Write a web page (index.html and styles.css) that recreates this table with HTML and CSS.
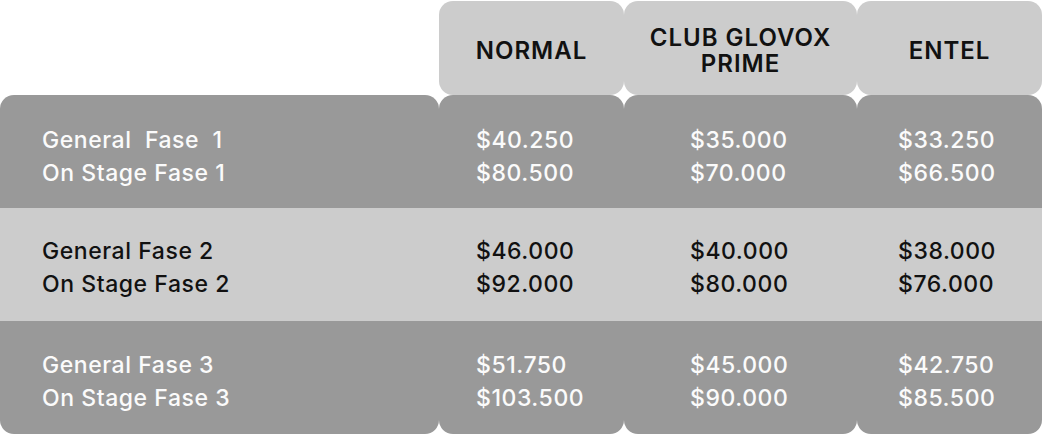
FILE: index.html
```html
<!DOCTYPE html>
<html lang="es">
<head>
<meta charset="utf-8">
<title>Precios</title>
<link rel="stylesheet" href="styles.css">
</head>
<body>
<div class="price-table">
  <div class="corner"></div>
  <div class="head">NORMAL</div>
  <div class="head">CLUB GLOVOX<br>PRIME</div>
  <div class="head">ENTEL</div>

  <div class="cell dark top c0">General&nbsp; Fase&nbsp; 1<br>On Stage Fase 1</div>
  <div class="cell dark top c1">$40.250<br>$80.500</div>
  <div class="cell dark top c2">$35.000<br>$70.000</div>
  <div class="cell dark top c3">$33.250<br>$66.500</div>

  <div class="cell light c0">General Fase 2<br>On Stage Fase 2</div>
  <div class="cell light c1">$46.000<br>$92.000</div>
  <div class="cell light c2">$40.000<br>$80.000</div>
  <div class="cell light c3">$38.000<br>$76.000</div>

  <div class="cell dark bottom c0">General Fase 3<br>On Stage Fase 3</div>
  <div class="cell dark bottom c1">$51.750<br>$103.500</div>
  <div class="cell dark bottom c2">$45.000<br>$90.000</div>
  <div class="cell dark bottom c3">$42.750<br>$85.500</div>
</div>
</body>
</html>
```

FILE: styles.css
```css
html, body {
  margin: 0;
  padding: 0;
  background: #ffffff;
}

body {
  font-family: Inter, "Liberation Sans", sans-serif;
}

.price-table {
  display: grid;
  grid-template-columns: 439px 185px 233px 185px;
  grid-template-rows: 94px 113px 113px 113px;
  padding-top: 1px;
  width: 1042px;
}

.head {
  background: #cccccc;
  border-radius: 14px;
  display: flex;
  align-items: center;
  justify-content: center;
  text-align: center;
  font-size: 24px;
  line-height: 26px;
  font-weight: 600;
  color: #111111;
  letter-spacing: 1px;
  padding-top: 5px;
}

.cell {
  padding-top: 27px;
  font-size: 23px;
  line-height: 33px;
  font-weight: 500;
  letter-spacing: 0.55px;
}

.dark {
  background: #999999;
  color: #fbfbfb;
}

.light {
  background: #cccccc;
  color: #111111;
}

.top {
  border-radius: 14px 14px 0 0;
  padding-top: 29px;
}

.bottom {
  border-radius: 0 0 14px 14px;
  padding-top: 28px;
}

.c0 { padding-left: 42px; }
.c1 { padding-left: 37px; }
.c2 { padding-left: 66px; }
.c3 { padding-left: 41px; }
```
